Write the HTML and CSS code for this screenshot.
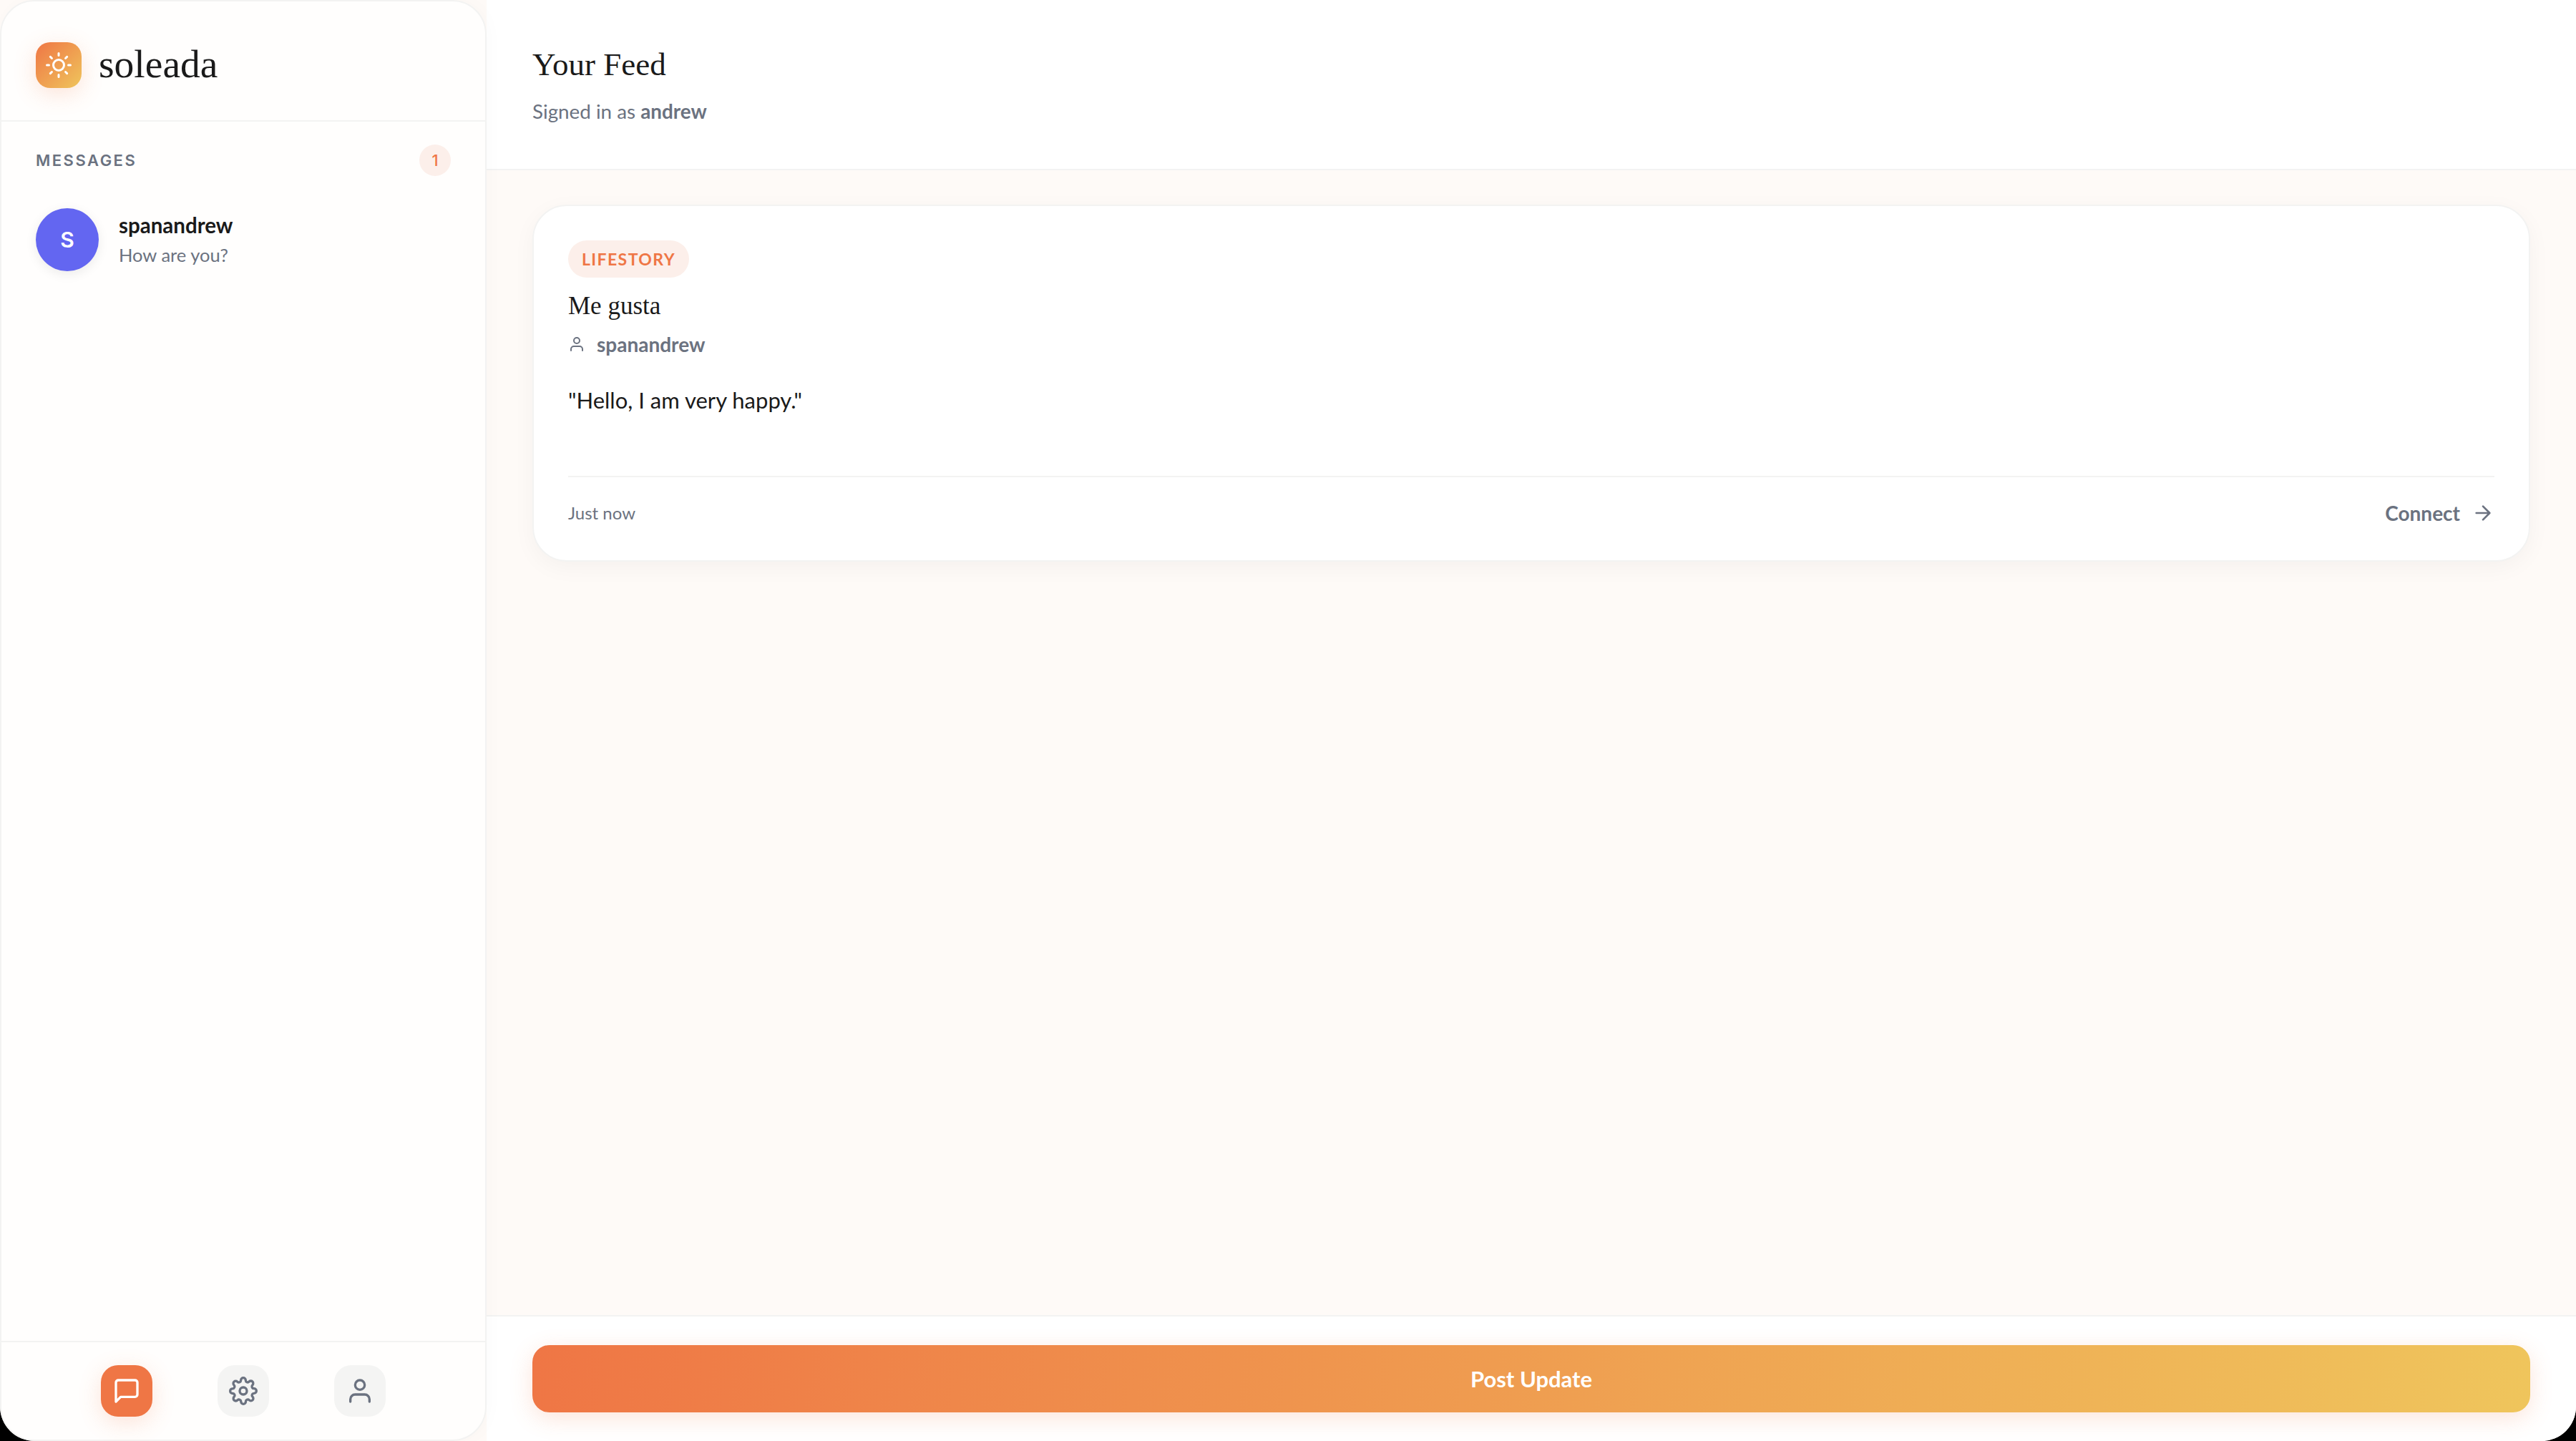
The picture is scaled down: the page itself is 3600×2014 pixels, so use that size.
FILE: index.html
```html
<!DOCTYPE html>
<html lang="en">
<head>
<meta charset="UTF-8" />
<meta name="viewport" content="width=device-width, initial-scale=1" />
<title>soleada</title>
<link rel="stylesheet" href="styles.css">
</head>
<body>
    <div class="app">
        <aside class="sidebar">
            <div class="brand">
                <div class="brand-icon">
                    <svg viewBox="0 0 24 24" width="36" height="36" fill="none" stroke="#fff" stroke-width="2" stroke-linecap="round" stroke-linejoin="round">
                        <circle cx="12" cy="12" r="5"/>
                        <path d="M12 1v2M12 21v2M4.22 4.22l1.42 1.42M18.36 18.36l1.42 1.42M1 12h2M21 12h2M4.22 19.78l1.42-1.42M18.36 5.64l1.42-1.42"/>
                    </svg>
                </div>
                <span class="brand-name">soleada</span>
            </div>
            <div class="messages">
                <div class="messages-head">
                    <span class="messages-title">MESSAGES</span>
                    <span class="messages-count">1</span>
                </div>
                <div class="chat-row">
                    <div class="avatar">S</div>
                    <div class="chat-text">
                        <div class="chat-name">spanandrew</div>
                        <div class="chat-last">How are you?</div>
                    </div>
                </div>
            </div>
            <nav class="side-nav">
                <button class="nav-btn active">
                    <svg viewBox="0 0 24 24" width="40" height="40" fill="none" stroke="currentColor" stroke-width="2" stroke-linecap="round" stroke-linejoin="round">
                        <path d="M21 15a2 2 0 0 1-2 2H7l-4 4V5a2 2 0 0 1 2-2h14a2 2 0 0 1 2 2z"/>
                    </svg>
                </button>
                <button class="nav-btn">
                    <svg viewBox="0 0 24 24" width="40" height="40" fill="none" stroke="currentColor" stroke-width="2" stroke-linecap="round" stroke-linejoin="round">
                        <circle cx="12" cy="12" r="3"/>
                        <path d="M19.4 15a1.65 1.65 0 0 0 .33 1.82l.06.06a2 2 0 0 1 0 2.83 2 2 0 0 1-2.83 0l-.06-.06a1.65 1.65 0 0 0-1.82-.33 1.65 1.65 0 0 0-1 1.51V21a2 2 0 0 1-2 2 2 2 0 0 1-2-2v-.09A1.65 1.65 0 0 0 9 19.4a1.65 1.65 0 0 0-1.82.33l-.06.06a2 2 0 0 1-2.83 0 2 2 0 0 1 0-2.83l.06-.06a1.65 1.65 0 0 0 .33-1.82 1.65 1.65 0 0 0-1.51-1H3a2 2 0 0 1-2-2 2 2 0 0 1 2-2h.09A1.65 1.65 0 0 0 4.6 9a1.65 1.65 0 0 0-.33-1.82l-.06-.06a2 2 0 0 1 0-2.83 2 2 0 0 1 2.83 0l.06.06a1.65 1.65 0 0 0 1.82.33H9a1.65 1.65 0 0 0 1-1.51V3a2 2 0 0 1 2-2 2 2 0 0 1 2 2v.09a1.65 1.65 0 0 0 1 1.51 1.65 1.65 0 0 0 1.82-.33l.06-.06a2 2 0 0 1 2.83 0 2 2 0 0 1 0 2.83l-.06.06a1.65 1.65 0 0 0-.33 1.82V9a1.65 1.65 0 0 0 1.51 1H21a2 2 0 0 1 2 2 2 2 0 0 1-2 2h-.09a1.65 1.65 0 0 0-1.51 1z"/>
                    </svg>
                </button>
                <button class="nav-btn">
                    <svg viewBox="0 0 24 24" width="40" height="40" fill="none" stroke="currentColor" stroke-width="2" stroke-linecap="round" stroke-linejoin="round">
                        <path d="M20 21v-2a4 4 0 0 0-4-4H8a4 4 0 0 0-4 4v2"/>
                        <circle cx="12" cy="7" r="4"/>
                    </svg>
                </button>
            </nav>
        </aside>

        <main class="main">
            <header class="main-header">
                <h1>Your Feed</h1>
                <p>Signed in as <strong>andrew</strong></p>
            </header>
            <section class="feed">
                <article class="card">
                    <span class="tag">LIFESTORY</span>
                    <h2>Me gusta</h2>
                    <div class="author">
                        <svg viewBox="0 0 24 24" width="24" height="24" fill="none" stroke="currentColor" stroke-width="2" stroke-linecap="round" stroke-linejoin="round">
                            <path d="M20 21v-2a4 4 0 0 0-4-4H8a4 4 0 0 0-4 4v2"/>
                            <circle cx="12" cy="7" r="4"/>
                        </svg>
                        <span>spanandrew</span>
                    </div>
                    <p class="quote">"Hello, I am very happy."</p>
                    <div class="card-foot">
                        <span class="time">Just now</span>
                        <a class="connect" href="#">Connect
                            <svg viewBox="0 0 24 24" width="32" height="32" fill="none" stroke="currentColor" stroke-width="2" stroke-linecap="round" stroke-linejoin="round">
                                <path d="M5 12h14M12 5l7 7-7 7"/>
                            </svg>
                        </a>
                    </div>
                </article>
            </section>
            <footer class="main-footer">
                <button class="post-btn">Post Update</button>
            </footer>
        </main>
    </div>
</body>
</html>
```

FILE: styles.css
```css
:root {
    --orange: #ef7645;
    --yellow: #efc55c;
    --cream: #fefaf7;
    --line: #f3f3f2;
    --ink: #1a1a1a;
    --gray: #6b7280;
}

* {
    box-sizing: border-box;
}

html, body {
    margin: 0;
    padding: 0;
    height: 100%;
    background: #000;
    overflow: hidden;
    font-family: Lato, "Open Sans", sans-serif;
    color: var(--ink);
}

.app {
    height: 100%;
    display: flex;
    background: var(--cream);
    border-radius: 0 0 48px 48px;
    overflow: hidden;
}

/* sidebar */
.sidebar {
    width: 680px;
    flex-shrink: 0;
    display: flex;
    flex-direction: column;
    background: #fffefd;
    border: 2px solid var(--line);
    border-radius: 48px;
    box-shadow: 4px 0 24px rgba(0,0,0,0.02);
    position: relative;
    z-index: 2;
}

.brand {
    height: 168px;
    flex-shrink: 0;
    display: flex;
    align-items: center;
    gap: 24px;
    padding: 12px 48px 0;
    border-bottom: 2px solid var(--line);
}

.brand-icon {
    width: 64px;
    height: 64px;
    display: flex;
    align-items: center;
    justify-content: center;
    border-radius: 20px;
    background: linear-gradient(135deg, var(--orange), var(--yellow));
    box-shadow: 0 8px 32px rgba(239,118,69,0.2);
}

.brand-name {
    font-family: "Liberation Serif", serif;
    font-size: 55.5px;
    line-height: 1;
    margin-top: -2px;
}

.messages {
    flex: 1;
    padding: 32px 48px;
}

.messages-head {
    display: flex;
    align-items: center;
    justify-content: space-between;
    height: 44px;
}

.messages-title {
    font-family: Inter, sans-serif;
    font-size: 22px;
    font-weight: 600;
    letter-spacing: 2.5px;
    color: var(--gray);
}

.messages-count {
    width: 44px;
    height: 44px;
    display: flex;
    align-items: center;
    justify-content: center;
    border-radius: 50%;
    background: #fcefea;
    color: var(--orange);
    font-family: Inter, sans-serif;
    font-size: 22px;
    font-weight: 500;
}

.chat-row {
    display: flex;
    align-items: center;
    gap: 28px;
    margin-top: 45px;
}

.avatar {
    width: 88px;
    height: 88px;
    display: flex;
    align-items: center;
    justify-content: center;
    border-radius: 50%;
    background: #6366f1;
    color: #fff;
    font-family: Inter, sans-serif;
    font-size: 30px;
    font-weight: 600;
    box-shadow: 0 4px 16px rgba(0,0,0,0.08);
}

.chat-name {
    font-size: 29.5px;
    font-weight: 700;
    line-height: 36px;
}

.chat-last {
    font-size: 25.5px;
    line-height: 36px;
    margin-top: 5px;
    color: var(--gray);
}

.side-nav {
    height: 138px;
    flex-shrink: 0;
    display: flex;
    justify-content: center;
    align-items: center;
    gap: 91px;
    border-top: 2px solid var(--line);
}

.nav-btn {
    width: 72px;
    height: 72px;
    padding: 0;
    display: flex;
    align-items: center;
    justify-content: center;
    border: none;
    border-radius: 24px;
    background: #f4f4f3;
    color: var(--gray);
}

.nav-btn.active {
    background: var(--orange);
    color: #fff;
    box-shadow: 0 8px 32px rgba(239,118,69,0.2);
}

/* main column */
.main {
    flex: 1;
    min-width: 0;
    display: flex;
    flex-direction: column;
}

.main-header {
    height: 238px;
    flex-shrink: 0;
    padding: 61px 64px 0;
    background: #fff;
    border-bottom: 2px solid var(--line);
}

.main-header h1 {
    margin: 0;
    font-family: "Liberation Serif", serif;
    font-size: 45px;
    font-weight: 400;
    line-height: 58px;
}

.main-header p {
    margin: 19px 0 0;
    font-size: 27.8px;
    line-height: 36px;
    color: var(--gray);
}

.feed {
    flex: 1;
    padding: 48px 64px;
}

.card {
    height: 499px;
    padding: 48px;
    background: #fff;
    border: 2px solid var(--line);
    border-radius: 48px;
    box-shadow: 0 8px 32px rgba(0,0,0,0.04);
    display: flex;
    flex-direction: column;
    align-items: flex-start;
}

.tag {
    height: 52px;
    padding: 0 19px;
    display: flex;
    align-items: center;
    border-radius: 26px;
    background: #fcefea;
    color: var(--orange);
    font-size: 23px;
    font-weight: 700;
    letter-spacing: 1.4px;
}

.card h2 {
    margin: 18px 0 0;
    font-family: "Liberation Serif", serif;
    font-size: 35px;
    font-weight: 400;
    line-height: 44px;
}

.author {
    display: flex;
    align-items: center;
    gap: 16px;
    margin-top: 13px;
    color: var(--gray);
    font-size: 28px;
    font-weight: 700;
    line-height: 36px;
}

.quote {
    margin: 38px 0 0;
    font-size: 31px;
    line-height: 44px;
}

.card-foot {
    margin-top: auto;
    width: 100%;
    padding-top: 32px;
    display: flex;
    align-items: center;
    justify-content: space-between;
    border-top: 2px solid var(--line);
}

.time {
    font-size: 24px;
    line-height: 36px;
    color: var(--gray);
}

.connect {
    display: flex;
    align-items: center;
    gap: 16px;
    font-size: 28px;
    line-height: 36px;
    font-weight: 700;
    color: var(--gray);
    text-decoration: none;
}

.main-footer {
    height: 176px;
    flex-shrink: 0;
    padding: 40px 64px 0;
    background: #fff;
    border-top: 2px solid var(--line);
}

.post-btn {
    width: 100%;
    height: 94px;
    border: none;
    border-radius: 24px;
    background: linear-gradient(100deg, var(--orange), var(--yellow));
    box-shadow: 0 8px 32px rgba(239,118,69,0.2);
    color: #fff;
    font-family: Lato, sans-serif;
    font-size: 31px;
    font-weight: 700;
}
```
